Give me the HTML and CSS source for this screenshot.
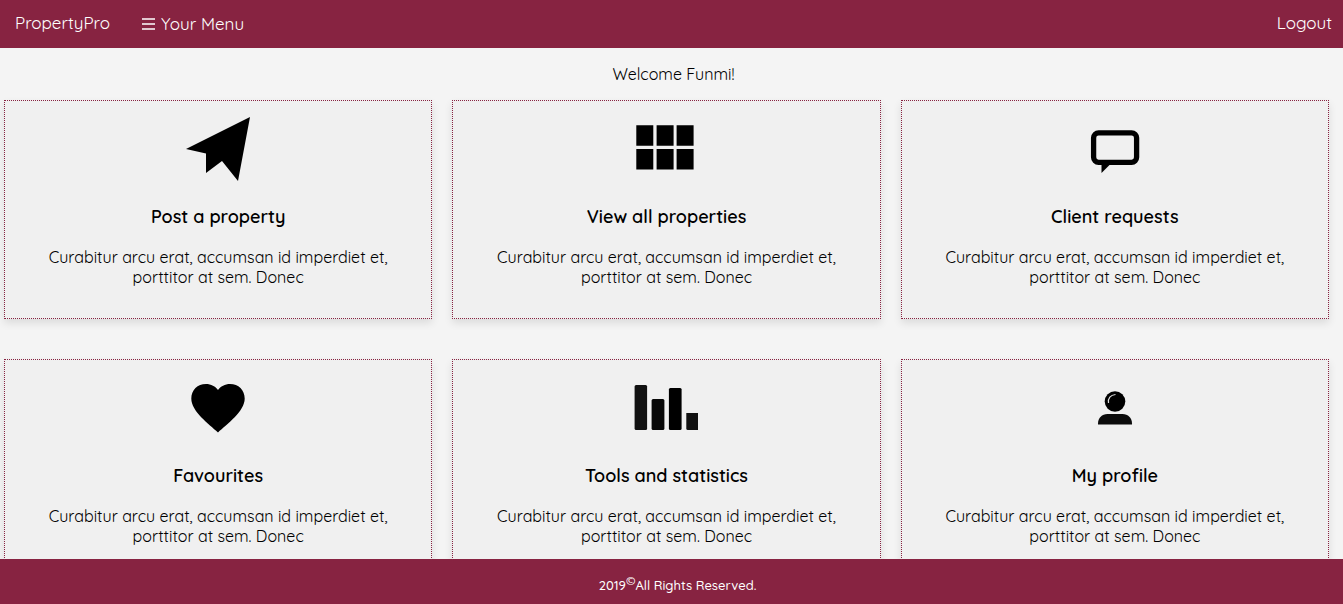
FILE: index.html
```html
<!DOCTYPE html>
<html lang="en">
<head>
<meta charset="utf-8">
<meta name="viewport" content="width=device-width, initial-scale=1">
<title>PropertyPro</title>
<link rel="stylesheet" href="styles.css">
</head>
<body>
<header class="topbar">
  <a class="brand" href="#">PropertyPro</a>
  <button class="menu-button" type="button"><svg class="menu-icon" viewBox="0 0 13 12" aria-hidden="true"><path d="M0 1h13M0 6h13M0 11h13" stroke="currentColor" stroke-width="1.5"/></svg>Your Menu</button>
  <a class="logout" href="#">Logout</a>
</header>
<main class="content">
  <p class="welcome">Welcome Funmi!</p>
  <div class="cards">
    <a class="card" href="#">
      <svg class="card-icon" viewBox="0 0 64 64" aria-hidden="true"><path d="M64 0 52 64 36 44 20 56V36.500L0 32z"/></svg>
      <h2 class="card-title">Post a property</h2>
      <p class="card-text">Curabitur arcu erat, accumsan id imperdiet et, porttitor at sem. Donec</p>
    </a>
    <a class="card" href="#">
      <svg class="card-icon" viewBox="0 0 64 64" aria-hidden="true"><path d="M2.300 8.300h17v20.400h-17zM22.600 8.300h17v20.400h-17zM42.600 8.300h17v20.400h-17zM2.300 32h17v20.600h-17zM22.600 32h17v20.600h-17zM42.600 32h17v20.600h-17z"/></svg>
      <h2 class="card-title">View all properties</h2>
      <p class="card-text">Curabitur arcu erat, accumsan id imperdiet et, porttitor at sem. Donec</p>
    </a>
    <a class="card" href="#">
      <svg class="card-icon" viewBox="0 0 64 64" aria-hidden="true"><rect x="10.600" y="15.800" width="43" height="29.500" rx="5" fill="none" stroke="#000" stroke-width="5.300"/><path d="M18.500 46v10l9-9z"/></svg>
      <h2 class="card-title">Client requests</h2>
      <p class="card-text">Curabitur arcu erat, accumsan id imperdiet et, porttitor at sem. Donec</p>
    </a>
    <a class="card" href="#">
      <svg class="card-icon" viewBox="0 0 64 64" aria-hidden="true"><path d="M32 56.500C23 48 5.300 35.500 5.300 22.500 5.300 14 11.500 8 20 8c5 0 9.500 2.400 12 6 2.500-3.600 7-6 12-6 8.500 0 14.700 6 14.700 14.500C58.700 35.500 41 48 32 56.500z"/></svg>
      <h2 class="card-title">Favourites</h2>
      <p class="card-text">Curabitur arcu erat, accumsan id imperdiet et, porttitor at sem. Donec</p>
    </a>
    <a class="card" href="#">
      <svg class="card-icon" viewBox="0 0 64 64" aria-hidden="true"><g transform="translate(.6)"><rect x="0" y="9" width="12.500" height="45" rx="1.500" fill="#111"/><rect x="17" y="23" width="12.800" height="31" rx="1.500" fill="#080808"/><rect x="34.300" y="12" width="12.700" height="42" rx="1.500"/><path fill="#111" d="M51.700 37H64v17H53.200q-1.500 0-1.500-1.500z"/></g></svg>
      <h2 class="card-title">Tools and statistics</h2>
      <p class="card-text">Curabitur arcu erat, accumsan id imperdiet et, porttitor at sem. Donec</p>
    </a>
    <a class="card" href="#">
      <svg class="card-icon" viewBox="0 0 64 64" aria-hidden="true"><circle cx="32" cy="25.500" r="10.300"/><path d="M25.500 27c-.8-5 2-8 7-8.500" fill="none" stroke="#ddd" stroke-width="1.200"/><path fill="#0b0b0b" d="M15 48.500v-1C15 42 19 38 24.500 38h15C45 38 49 42 49 47.500v1z"/></svg>
      <h2 class="card-title">My profile</h2>
      <p class="card-text">Curabitur arcu erat, accumsan id imperdiet et, porttitor at sem. Donec</p>
    </a>
  </div>
</main>
<footer class="footer"><p class="copyright">2019<sup class="mark">©</sup>All Rights Reserved.</p></footer>
</body>
</html>
```
FILE: styles.css
```css
* { box-sizing: border-box; }
html { scrollbar-width: none; }
body {
  margin: 0;
  background: #f4f4f4;
  color: #000;
  font-family: Quicksand, Inter, sans-serif;
  font-size: 16px;
  line-height: 20px;
}
a { color: inherit; text-decoration: none; }
.topbar {
  display: flex;
  align-items: center;
  min-height: 48px;
  padding: 0 11px 2px 15px;
  background: #872341;
  color: #fff;
  font-size: 17px;
}
.menu-button {
  display: flex;
  align-items: center;
  gap: 6px;
  margin-left: 32px;
  padding: 2px 0 0;
  border: 0;
  background: none;
  color: inherit;
  font: inherit;
}
.menu-icon { width: 13px; height: 12px; }
.logout { margin-left: auto; }
.content { padding: 16px 14px 80px 4px; }
.welcome {
  margin: 0 0 16px;
  padding-left: 14px;
  font-weight: 400;
  text-align: center;
}
.cards {
  display: grid;
  grid-template-columns: repeat(3, 1fr);
  gap: 40px 20px;
}
.card {
  padding: 16px 40px 31px;
  border: 1px dotted #872341;
  background: #f0f0f0;
  box-shadow: 0 4px 8px rgba(0, 0, 0, 0.1);
  text-align: center;
}
.card-icon { display: block; width: 64px; height: 64px; margin: 0 auto; }
.card-title {
  margin: 24px 0 18px;
  font-size: 18px;
  font-weight: 600;
  line-height: 24px;
}
.card-text { margin: 0; font-weight: 400; }
.footer {
  position: fixed;
  right: 0;
  bottom: 0;
  left: 0;
  padding: 16px 0 9px 12px;
  background: #872341;
  color: #fff;
  font-size: 13px;
  font-weight: 500;
  text-align: center;
}
.copyright { margin: 0; }
.mark { font-size: 12px; line-height: 0; }
```
